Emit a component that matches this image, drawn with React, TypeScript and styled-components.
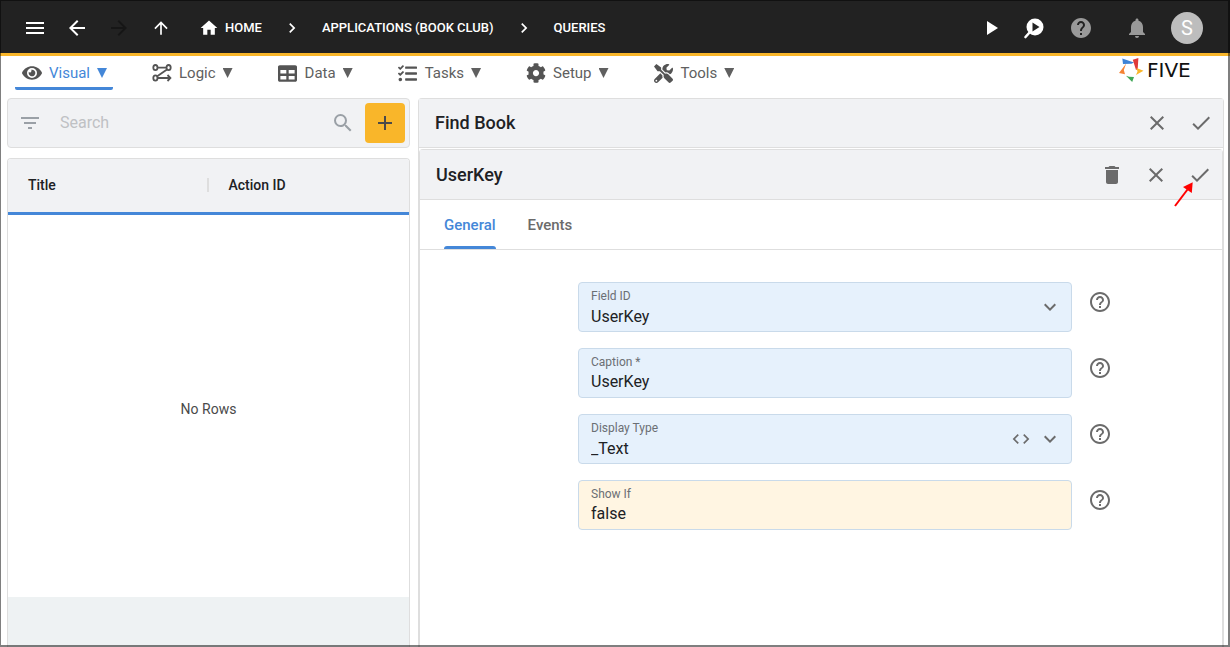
import React from 'react';
import styled, { createGlobalStyle, css } from 'styled-components';
import {
  MdMenu, MdArrowBack, MdArrowForward, MdArrowUpward, MdHome, MdChevronRight, MdPlayArrow,
  MdHelp, MdNotifications, MdFilterList, MdSearch, MdAdd, MdClose, MdCheck, MdDelete,
  MdHelpOutline, MdExpandMore, MdCode,
} from 'react-icons/md';
import { FaEye, FaTable, FaTasks, FaCog, FaTools } from 'react-icons/fa';

const blue = '#4487d8';
const line = '#dedede';
const panel = '#f1f2f4';
const amber = '#f9b62a';

const GlobalStyle = createGlobalStyle`
  *, *::before, *::after { box-sizing: border-box; }
  body { margin: 0; background: #fff; color: #202124; font: 400 14px/20px Roboto, "Liberation Sans", sans-serif; }
  button { border: 0; padding: 0; margin: 0; background: none; font: inherit; color: inherit; cursor: pointer; }
  a { color: inherit; text-decoration: none; }
  svg { display: block; flex: none; }
  h2 { margin: 0; }
`;

const Page = styled.div`
  height: 100vh;
  display: flex;
  flex-direction: column;
  overflow: hidden;
  &::after {
    content: '';
    position: fixed;
    inset: 0;
    border: solid rgba(0, 0, 0, 0.5);
    border-width: 1px 2px 2px 1px;
    pointer-events: none;
  }
`;

const TopBar = styled.header`
  flex: none;
  height: 56px;
  display: flex;
  align-items: center;
  justify-content: space-between;
  padding: 0 27px 0 23px;
  background: #222;
  color: #fff;
  border-bottom: 3px solid ${amber};
`;

const BarGroup = styled.div<{ $gap: number }>`
  display: flex;
  align-items: center;
  gap: ${p => p.$gap}px;
`;

const BarSide = styled(BarGroup)`
  padding-top: 2px;
`;

const IconButton = styled.button<{ $color?: string; $size?: number }>`
  width: 24px;
  height: 24px;
  display: flex;
  align-items: center;
  justify-content: center;
  color: ${p => p.$color ?? 'inherit'};
  font-size: ${p => p.$size ?? 24}px;
`;

const Crumbs = styled.nav`
  display: flex;
  align-items: center;
  gap: 20px;
  padding-left: 8px;
  font-size: 13px;
  font-weight: 500;
  text-transform: uppercase;
`;

const Crumb = styled.a`
  display: flex;
  align-items: center;
  gap: 6px;
`;

const Avatar = styled.button`
  width: 32px;
  height: 32px;
  border-radius: 50%;
  background: #bdbdbd;
  color: #fff;
  font-size: 20px;
`;

const NavBar = styled.div`
  flex: none;
  height: 42px;
  display: flex;
  align-items: flex-start;
  justify-content: space-between;
  padding: 0 23px 0 15px;
`;

const Menus = styled.nav`
  display: flex;
  gap: 32px;
`;

const MenuButton = styled.button<{ $active?: boolean }>`
  height: 34px;
  display: flex;
  align-items: center;
  gap: 7px;
  padding: 3px 6px 0 7px;
  font-size: 15px;
  color: ${p => (p.$active ? blue : '#606060')};
  border-bottom: 3px solid ${p => (p.$active ? blue : 'transparent')};
  border-radius: 2px;
`;

const MenuIcon = styled.span`
  width: 20px;
  display: flex;
  justify-content: center;
  color: #545454;
`;

const Caret = styled.span`
  width: 10px;
  height: 10px;
  background: currentColor;
  clip-path: polygon(0 0, 100% 0, 50% 100%);
`;

const Workspace = styled.main`
  flex: 1;
  min-height: 0;
  display: grid;
  grid-template-columns: minmax(0, 1fr) minmax(0, 2fr);
  gap: 8px;
  padding: 0 6px 0 7px;
`;

const ListColumn = styled.section`
  display: flex;
  flex-direction: column;
  gap: 10px;
  min-height: 0;
`;

const SearchBar = styled.form`
  flex: none;
  height: 50px;
  display: flex;
  align-items: center;
  gap: 10px;
  padding: 0 4px 0 10px;
  background: ${panel};
  border: 1px solid ${line};
  border-radius: 4px;
`;

const SearchInput = styled.input`
  flex: 1;
  min-width: 0;
  padding: 0 8px;
  border: 0;
  outline: 0;
  background: none;
  font: 400 16px/24px Roboto, sans-serif;
  &::placeholder { color: #bfc1c4; opacity: 1; }
`;

const AddButton = styled.button`
  width: 40px;
  height: 40px;
  display: flex;
  align-items: center;
  justify-content: center;
  border-radius: 4px;
  background: ${amber};
  color: #4a4a4a;
  font-size: 24px;
`;

const TableCard = styled.div`
  flex: 1;
  min-height: 0;
  display: flex;
  flex-direction: column;
  border: 1px solid ${line};
  border-bottom: 0;
  border-radius: 4px 4px 0 0;
  overflow: hidden;
`;

const DataTable = styled.table`
  flex: 1;
  width: 100%;
  table-layout: fixed;
  border-collapse: separate;
  border-spacing: 0;
`;

const HeadCell = styled.th`
  height: 56px;
  padding: 0 20px 2px;
  text-align: left;
  font-weight: 500;
  background: ${panel};
  border-bottom: 3px solid ${blue};
`;

const HeadInner = styled.div<{ $divided?: boolean }>`
  ${p => p.$divided && css`
    margin-left: -22px;
    padding-left: 20px;
    line-height: 14px;
    border-left: 2px solid ${line};
  `}
`;

const EmptyCell = styled.td`
  padding: 6px 0 0;
  text-align: center;
  color: #4a4a4a;
`;

const TableFooter = styled.div`
  flex: none;
  height: 50px;
  background: #eef2f3;
`;

const DetailPanel = styled.section`
  display: flex;
  flex-direction: column;
  min-height: 0;
  border: 1px solid ${line};
  border-bottom: 0;
  border-radius: 4px 4px 0 0;
`;

const PanelHeader = styled.header<{ $inner?: boolean }>`
  flex: none;
  height: ${p => (p.$inner ? 50 : 49)}px;
  display: flex;
  align-items: center;
  justify-content: space-between;
  padding: 0 10px 0 16px;
  background: ${panel};
  border-bottom: 1px solid ${line};
`;

const PanelTitle = styled.h2`
  font-size: 18px;
  line-height: 24px;
  font-weight: 500;
`;

const Actions = styled.div`
  display: flex;
  gap: 20px;
  color: #6b6b6b;
`;

const InnerPanel = styled.section`
  flex: 1;
  min-height: 0;
  margin-top: 1px;
  border: 1px solid ${line};
  border-bottom: 0;
  border-radius: 4px 4px 0 0;
`;

const Tabs = styled.div`
  height: 50px;
  display: flex;
  gap: 32px;
  padding: 0 24px;
  border-bottom: 1px solid ${line};
`;

const Tab = styled.button<{ $active?: boolean }>`
  position: relative;
  font-size: 15px;
  font-weight: 500;
  color: ${p => (p.$active ? blue : '#6b6b6b')};
  ${p => p.$active && css`
    &::after {
      content: '';
      position: absolute;
      inset: auto 0 0;
      height: 3px;
      border-radius: 3px 3px 0 0;
      background: ${blue};
    }
  `}
`;

const Form = styled.form`
  display: flex;
  flex-direction: column;
  gap: 16px;
  padding: 32px 0 0 8px;
`;

const FieldRow = styled.div`
  display: grid;
  grid-template-columns: minmax(0, 1fr) minmax(0, 494px) minmax(0, 1fr);
`;

const FieldBox = styled.div<{ $warm?: boolean }>`
  grid-column: 2;
  height: 50px;
  display: flex;
  padding: 0 9px 0 12px;
  background: ${p => (p.$warm ? '#fff5e2' : '#e6f1fc')};
  border: 1px solid #c9daea;
  border-radius: 4px;
`;

const FieldText = styled.div`
  flex: 1;
  min-width: 0;
  display: flex;
  flex-direction: column;
  padding-top: 5px;
`;

const FieldLabel = styled.label`
  font-size: 12px;
  line-height: 16px;
  color: #6b6f74;
`;

const control = css`
  width: 100%;
  padding: 0;
  border: 0;
  outline: 0;
  background: none;
  color: #202124;
  font: 400 16px/24px Roboto, sans-serif;
`;

const FieldInput = styled.input`
  ${control}
  height: 24px;
`;

const FieldSelect = styled.select`
  ${control}
  height: 26px;
  appearance: none;
`;

const FieldIcons = styled.div`
  display: flex;
  gap: 5px;
  padding-top: 12px;
  color: #6b6b6b;
  pointer-events: none;
  button { pointer-events: auto; }
`;

const HelpSlot = styled.div`
  padding: 8px 0 0 16px;
  color: #6b6b6b;
`;

const PointerAnchor = styled.div`
  position: relative;
  display: flex;
`;

const Pointer = styled.svg`
  position: absolute;
  right: 15px;
  top: 17px;
  pointer-events: none;
`;

const Brand = styled.a`
  width: 90px;
  display: flex;
  align-items: center;
  gap: 2px;
  padding-top: 1px;
  color: #111;
  font: 400 20px/26px "DejaVu Sans", sans-serif;
`;

const QueryRunIcon = () => (
  <svg width="24" height="24" viewBox="0 0 24 24" aria-hidden="true">
    <path d="M7 16 2.500 21" stroke="#fff" strokeWidth="2.600" strokeLinecap="round" />
    <circle cx="12" cy="11" r="8.500" fill="#fff" />
    <path d="M9.500 6.500v9l7-4.500z" fill="#222" />
  </svg>
);

const LogicIcon = () => (
  <svg width="20" height="20" viewBox="0 0 20 20" fill="none" stroke="currentColor" strokeWidth="1.800" aria-hidden="true">
    <ellipse cx="3.400" cy="4.600" rx="2.100" ry="2.600" />
    <ellipse cx="16.600" cy="4.600" rx="2.100" ry="2.600" />
    <ellipse cx="3.400" cy="15" rx="2.100" ry="2.600" />
    <path d="M5.500 4.600h9M15 6.600 5.200 13.300M5.500 15h12.500M15.500 12l2.900 3-2.900 3" />
  </svg>
);

const FiveMark = () => (
  <svg width="28" height="26" viewBox="0 0 28 26" aria-hidden="true">
    <path d="M5.300 1.500 17 5.500 14.500 6.700 6 7z" fill="#3f83d6" />
    <path d="M21.400 1 15.800 2.700 19 13 20.700 12z" fill="#e03a3a" />
    <path d="M19 18 26.500 13.800 19.500 11 20.500 14.500z" fill="#f9b62a" />
    <path d="M9 18.700 12 19.800 17 20 15.200 25z" fill="#3fa757" />
    <path d="M9.200 6.500 2 16 8 17.300 6.800 13z" fill="#f58233" />
  </svg>
);

type Field = { id: string; label: string; value: string; code?: boolean; drop?: boolean; warm?: boolean };

const fields: Field[] = [
  { id: 'field-id', label: 'Field ID', value: 'UserKey', drop: true },
  { id: 'caption', label: 'Caption *', value: 'UserKey' },
  { id: 'display-type', label: 'Display Type', value: '_Text', code: true, drop: true },
  { id: 'show-if', label: 'Show If', value: 'false', warm: true },
];

const menus = [
  { name: 'Visual', icon: <FaEye size={20} />, active: true },
  { name: 'Logic', icon: <LogicIcon /> },
  { name: 'Data', icon: <FaTable size={19} /> },
  { name: 'Tasks', icon: <FaTasks size={19} /> },
  { name: 'Setup', icon: <FaCog size={20} /> },
  { name: 'Tools', icon: <FaTools size={19} /> },
];

export default function App() {
  return (
    <Page>
      <GlobalStyle />
      <TopBar>
        <BarSide $gap={18}>
          <IconButton aria-label="Menu"><MdMenu /></IconButton>
          <IconButton aria-label="Back"><MdArrowBack /></IconButton>
          <IconButton aria-label="Forward" $color="#161616"><MdArrowForward /></IconButton>
          <IconButton aria-label="Up" $size={20}><MdArrowUpward /></IconButton>
          <Crumbs aria-label="Breadcrumb">
            <Crumb href="#home"><MdHome size={20} />Home</Crumb>
            <MdChevronRight size={20} />
            <Crumb href="#applications">Applications (Book Club)</Crumb>
            <MdChevronRight size={20} />
            <Crumb href="#queries">Queries</Crumb>
          </Crumbs>
        </BarSide>
        <BarSide $gap={22}>
          <BarGroup $gap={20}>
            <IconButton aria-label="Run"><MdPlayArrow /></IconButton>
            <IconButton aria-label="Run query"><QueryRunIcon /></IconButton>
          </BarGroup>
          <BarGroup $gap={32}>
            <IconButton aria-label="Help" $color="#999"><MdHelp /></IconButton>
            <IconButton aria-label="Notifications" $color="#999"><MdNotifications /></IconButton>
          </BarGroup>
          <Avatar aria-label="Account">S</Avatar>
        </BarSide>
      </TopBar>

      <NavBar>
        <Menus>
          {menus.map(m => (
            <MenuButton key={m.name} $active={m.active}>
              <MenuIcon>{m.icon}</MenuIcon>{m.name}<Caret />
            </MenuButton>
          ))}
        </Menus>
        <Brand href="#five"><FiveMark />FIVE</Brand>
      </NavBar>

      <Workspace>
        <ListColumn>
          <SearchBar>
            <IconButton type="button" aria-label="Filter" $color="#9aa0a6"><MdFilterList /></IconButton>
            <SearchInput aria-label="Search" placeholder="Search" />
            <IconButton type="button" aria-label="Search" $color="#9aa0a6"><MdSearch /></IconButton>
            <AddButton type="button" aria-label="Add"><MdAdd /></AddButton>
          </SearchBar>
          <TableCard>
            <DataTable>
              <thead>
                <tr>
                  <HeadCell scope="col">Title</HeadCell>
                  <HeadCell scope="col"><HeadInner $divided>Action ID</HeadInner></HeadCell>
                </tr>
              </thead>
              <tbody>
                <tr><EmptyCell colSpan={2}>No Rows</EmptyCell></tr>
              </tbody>
            </DataTable>
            <TableFooter />
          </TableCard>
        </ListColumn>

        <DetailPanel>
          <PanelHeader>
            <PanelTitle>Find Book</PanelTitle>
            <Actions>
              <IconButton aria-label="Close query"><MdClose /></IconButton>
              <IconButton aria-label="Save query"><MdCheck /></IconButton>
            </Actions>
          </PanelHeader>
          <InnerPanel>
            <PanelHeader $inner>
              <PanelTitle>UserKey</PanelTitle>
              <Actions>
                <IconButton aria-label="Delete"><MdDelete /></IconButton>
                <IconButton aria-label="Close field"><MdClose /></IconButton>
                <PointerAnchor>
                  <IconButton aria-label="Save field"><MdCheck /></IconButton>
                  <Pointer width="24" height="30" viewBox="0 0 24 30" aria-hidden="true">
                    <path d="M2 26 14.500 9.500" stroke="#f00" strokeWidth="2" />
                    <path d="M19.700 2.300 18.800 13 10 7z" fill="#f00" />
                  </Pointer>
                </PointerAnchor>
              </Actions>
            </PanelHeader>
            <Tabs role="tablist">
              <Tab role="tab" aria-selected="true" $active>General</Tab>
              <Tab role="tab" aria-selected="false">Events</Tab>
            </Tabs>
            <Form>
              {fields.map(f => (
                <FieldRow key={f.id}>
                  <FieldBox $warm={f.warm}>
                    <FieldText>
                      <FieldLabel htmlFor={f.id}>{f.label}</FieldLabel>
                      {f.drop ? (
                        <FieldSelect id={f.id} defaultValue={f.value}>
                          <option value={f.value}>{f.value}</option>
                        </FieldSelect>
                      ) : (
                        <FieldInput id={f.id} defaultValue={f.value} />
                      )}
                    </FieldText>
                    <FieldIcons>
                      {f.code && <IconButton type="button" aria-label="Edit code" $size={20}><MdCode /></IconButton>}
                      {f.drop && <MdExpandMore size={24} />}
                    </FieldIcons>
                  </FieldBox>
                  <HelpSlot>
                    <IconButton type="button" aria-label={`Help for ${f.label}`}><MdHelpOutline /></IconButton>
                  </HelpSlot>
                </FieldRow>
              ))}
            </Form>
          </InnerPanel>
        </DetailPanel>
      </Workspace>
    </Page>
  );
}
